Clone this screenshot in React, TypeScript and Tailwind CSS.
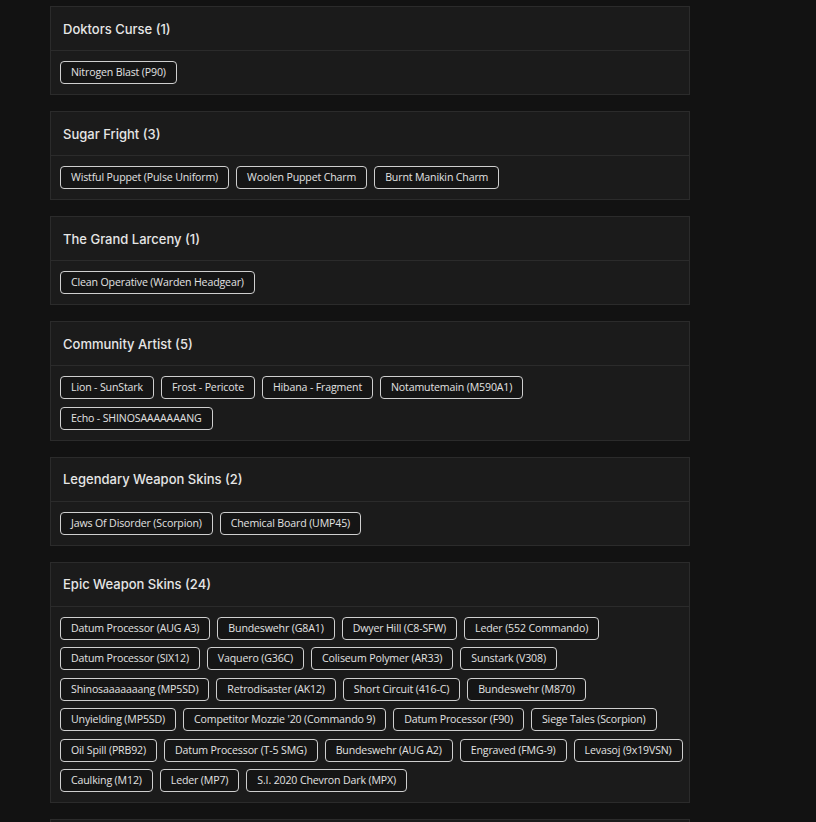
import React from 'react';

// each group's chips are listed row by row, the way the page shows them
type Group = { title: string; rows: string[][] };

const groups: Group[] = [
  { title: 'Doktors Curse', rows: [['Nitrogen Blast (P90)']] },
  { title: 'Sugar Fright', rows: [['Wistful Puppet (Pulse Uniform)', 'Woolen Puppet Charm', 'Burnt Manikin Charm']] },
  { title: 'The Grand Larceny', rows: [['Clean Operative (Warden Headgear)']] },
  {
    title: 'Community Artist',
    rows: [
      ['Lion - SunStark', 'Frost - Pericote', 'Hibana - Fragment', 'Notamutemain (M590A1)'],
      ['Echo - SHINOSAAAAAAANG'],
    ],
  },
  { title: 'Legendary Weapon Skins', rows: [['Jaws Of Disorder (Scorpion)', 'Chemical Board (UMP45)']] },
  {
    title: 'Epic Weapon Skins',
    rows: [
      ['Datum Processor (AUG A3)', 'Bundeswehr (G8A1)', 'Dwyer Hill (C8-SFW)', 'Leder (552 Commando)'],
      ['Datum Processor (SIX12)', 'Vaquero (G36C)', 'Coliseum Polymer (AR33)', 'Sunstark (V308)'],
      ['Shinosaaaaaaang (MP5SD)', 'Retrodisaster (AK12)', 'Short Circuit (416-C)', 'Bundeswehr (M870)'],
      ['Unyielding (MP5SD)', "Competitor Mozzie '20 (Commando 9)", 'Datum Processor (F90)', 'Siege Tales (Scorpion)'],
      ['Oil Spill (PRB92)', 'Datum Processor (T-5 SMG)', 'Bundeswehr (AUG A2)', 'Engraved (FMG-9)', 'Levasoj (9x19VSN)'],
      ['Caulking (M12)', 'Leder (MP7)', 'S.I. 2020 Chevron Dark (MPX)'],
    ],
  },
];

function Card({ group }: { group: Group }) {
  const count = group.rows.reduce((n, r) => n + r.length, 0);
  return (
    <div className="mb-4 w-[640px] border border-[#2b2b2b] bg-[#1b1b1b]">
      <div className="flex h-[44px] items-center border-b border-[#2b2b2b] px-3">
        <h2 className="text-[13px] leading-5 font-medium text-[#e6e6e6]" style={{ fontFamily: 'Inter, sans-serif' }}>
          {group.title} ({count})
        </h2>
      </div>
      <div className="flex flex-col gap-y-[7.5px] px-[9px] py-[10px]">
        {group.rows.map((row, i) => (
          <div key={i} className="flex gap-x-[7px]">
            {row.map((item) => (
              <span
                key={item}
                className="whitespace-nowrap rounded-[4px] border border-[#cfcfcf] bg-[#151515] px-[10px] py-[4px] text-[10.6px] leading-[13px] tracking-[-0.15px] text-[#e2e2e2]"
              >
                {item}
              </span>
            ))}
          </div>
        ))}
      </div>
    </div>
  );
}

export default function App() {
  return (
    <div className="h-[822px] overflow-hidden bg-[#121212] pl-[50px] pt-[6px]" style={{ fontFamily: '"Open Sans", "Noto Sans", sans-serif' }}>
      {groups.map((g) => (
        <Card key={g.title} group={g} />
      ))}
      {/* next section, only its top edge is in view */}
      <div className="h-[44px] w-[640px] border border-[#2b2b2b] bg-[#1b1b1b]" />
    </div>
  );
}
